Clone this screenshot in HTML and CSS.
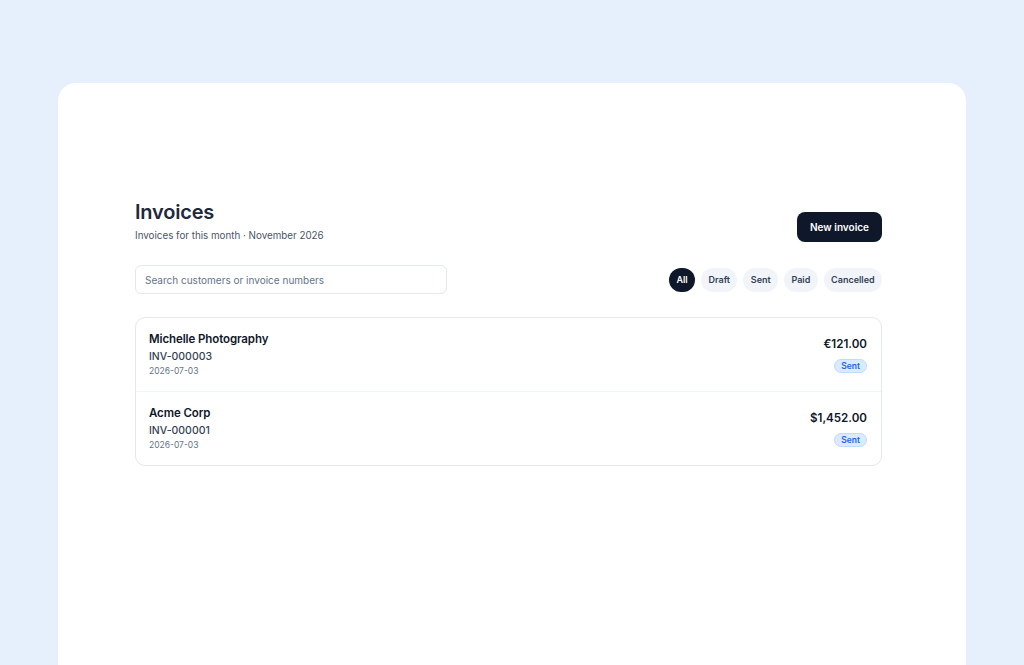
FILE: index.html
```html
<!DOCTYPE html>
<html>
<head>
<meta charset="utf-8">
<link rel="stylesheet" href="styles.css">
</head>
<body>
<div class="page">
  <div class="card">
    <div class="header">
      <div class="titles">
        <h1 class="title">Invoices</h1>
        <p class="subtitle">Invoices for this month · November 2026</p>
      </div>
      <button class="btn-primary">New invoice</button>
    </div>
    <div class="toolbar">
      <input class="search" type="text" placeholder="Search customers or invoice numbers">
      <div class="chips">
        <span class="chip chip-active">All</span>
        <span class="chip">Draft</span>
        <span class="chip">Sent</span>
        <span class="chip">Paid</span>
        <span class="chip">Cancelled</span>
      </div>
    </div>
    <div class="list">
      <div class="row">
        <div class="info">
          <div class="name">Michelle Photography</div>
          <div class="number">INV-000003</div>
          <div class="date">2026-07-03</div>
        </div>
        <div class="meta">
          <div class="amount">€121.00</div>
          <span class="badge">Sent</span>
        </div>
      </div>
      <div class="row">
        <div class="info">
          <div class="name">Acme Corp</div>
          <div class="number">INV-000001</div>
          <div class="date">2026-07-03</div>
        </div>
        <div class="meta">
          <div class="amount">$1,452.00</div>
          <span class="badge">Sent</span>
        </div>
      </div>
    </div>
  </div>
</div>
</body>
</html>
```

FILE: styles.css
```css
* { box-sizing: border-box; }
html, body { margin: 0; padding: 0; }
body {
  background: #e6f0fd;
  font-family: Inter, "Noto Sans", sans-serif;
  color: #0f172a;
  height: 665px;
  overflow: hidden;
}
.page {
  padding: 83px 58px 0 58px;
}
.card {
  background: #ffffff;
  border-radius: 18px;
  min-height: 600px;
  padding: 117px 84px 40px 77px;
}
.header {
  display: flex;
  justify-content: space-between;
  align-items: flex-end;
}
.title {
  margin: 0;
  font-size: 20px;
  line-height: 24px;
  font-weight: 600;
  color: #1e293b;
  letter-spacing: -0.2px;
}
.subtitle {
  margin: 4px 0 0 0;
  font-size: 9.8px;
  line-height: 16px;
  color: #475569;
}
.btn-primary {
  height: 30px;
  width: 85px;
  border: none;
  border-radius: 8px;
  background: #0f172a;
  color: #ffffff;
  font-family: inherit;
  font-size: 10px;
  font-weight: 600;
  margin-bottom: 2px;
}
.toolbar {
  display: flex;
  justify-content: space-between;
  align-items: center;
  margin-top: 21px;
}
.search {
  width: 312px;
  height: 29px;
  border: 1px solid #e2e8f0;
  border-radius: 6px;
  padding: 0 9px;
  font-family: inherit;
  font-size: 10px;
  color: #0f172a;
  outline: none;
}
.search::placeholder { color: #64748b; }
.chips {
  display: flex;
  gap: 6px;
}
.chip {
  height: 24px;
  padding: 0 7.4px;
  border-radius: 12px;
  background: #f1f5f9;
  color: #334155;
  font-size: 9px;
  font-weight: 600;
  display: flex;
  align-items: center;
}
.chip-active {
  background: #0f172a;
  color: #ffffff;
}
.list {
  margin-top: 23px;
  border: 1px solid #e5e7eb;
  border-radius: 10px;
}
.row {
  display: flex;
  justify-content: space-between;
  align-items: center;
  padding: 13px 14px 14px 13px;
}
.row + .row {
  border-top: 1px solid #f1f5f9;
}
.name {
  font-size: 11.5px;
  line-height: 16px;
  font-weight: 600;
  color: #0f172a;
  letter-spacing: -0.1px;
}
.number {
  margin-top: 2px;
  font-size: 10.5px;
  line-height: 16px;
  font-weight: 500;
  color: #334155;
}
.date {
  font-size: 8.5px;
  line-height: 12px;
  color: #64748b;
}
.meta {
  display: flex;
  flex-direction: column;
  align-items: flex-end;
  gap: 6px;
}
.amount {
  font-size: 11.6px;
  line-height: 18px;
  font-weight: 600;
  color: #0f172a;
}
.badge {
  height: 14px;
  padding: 0 6px;
  border-radius: 7px;
  background: #dbeafe;
  border: 1px solid #bfdbfe;
  color: #2563eb;
  font-size: 8.5px;
  font-weight: 600;
  display: flex;
  align-items: center;
}
```
